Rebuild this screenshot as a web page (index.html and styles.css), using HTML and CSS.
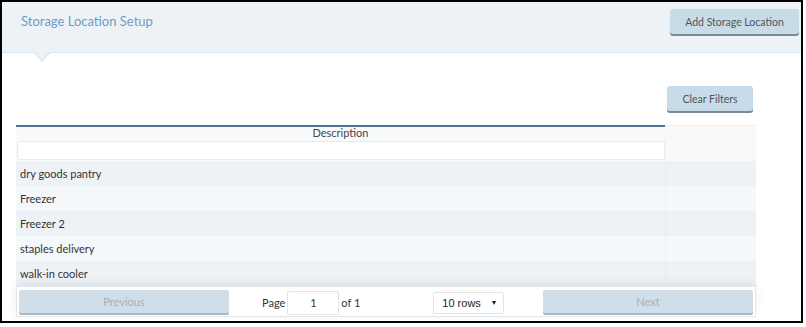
FILE: index.html
```html
<!DOCTYPE html>
<html>
<head>
<meta charset="utf-8">
<link rel="stylesheet" href="styles.css">
</head>
<body>
<div class="frame">
  <div class="header">
    <div class="title">Storage Location Setup</div>
    <button class="btn btn-add">Add Storage Location</button>
    <span class="pointer"></span>
  </div>
  <div class="content">
    <div class="toolbar">
      <button class="btn btn-clear">Clear Filters</button>
    </div>
    <div class="grid">
      <div class="row head">
        <div class="c1 head-title">Description</div>
        <div class="c2"></div>
      </div>
      <div class="row filter">
        <div class="c1"><input class="filter-input" type="text"></div>
        <div class="c2"></div>
      </div>
      <div class="row odd"><div class="c1">dry goods pantry</div><div class="c2"></div></div>
      <div class="row even"><div class="c1">Freezer</div><div class="c2"></div></div>
      <div class="row odd"><div class="c1">Freezer 2</div><div class="c2"></div></div>
      <div class="row even"><div class="c1">staples delivery</div><div class="c2"></div></div>
      <div class="row odd"><div class="c1">walk-in cooler</div><div class="c2"></div></div>
      <div class="pager">
        <button class="pbtn">Previous</button>
        <div class="pcenter">
          <span class="pinfo">Page <input class="pinput" type="text" value="1"> of 1</span>
          <span class="select">10 rows<span class="arrow">&#9660;</span></span>
        </div>
        <button class="pbtn">Next</button>
      </div>
    </div>
  </div>
</div>
</body>
</html>
```
FILE: styles.css
```css
* { box-sizing: border-box; }
body { margin: 0; background: #fff; font-family: Lato, "Open Sans", sans-serif; }
.frame {
  width: 803px;
  height: 323px;
  border: 2px solid #000;
  background: #fff;
  position: relative;
}
.header {
  position: relative;
  height: 51px;
  background: #edf2f7;
  border-bottom: 1px solid #dbe5ee;
  display: flex;
  justify-content: space-between;
  align-items: flex-start;
  padding: 7px 2px 0 19px;
}
.title {
  color: #6f9cc4;
  font-size: 13px;
  line-height: 16px;
  margin-top: 4px;
}
.pointer {
  position: absolute;
  left: 31px;
  top: 50px;
  width: 0;
  height: 0;
  border-left: 9px solid transparent;
  border-right: 9px solid transparent;
  border-top: 10px solid #dbe5ee;
}
.pointer::after {
  content: "";
  position: absolute;
  left: -8px;
  top: -11px;
  border-left: 8px solid transparent;
  border-right: 8px solid transparent;
  border-top: 9px solid #edf2f7;
}
.btn {
  font-family: Lato, sans-serif;
  font-size: 10.5px;
  color: #555;
  background: #c7dbe9;
  border: none;
  border-radius: 3px;
  box-shadow: 0 2px 0 #7d8993;
  height: 25px;
  padding: 0;
}
.btn-add { width: 129px; }
.content { padding: 0 0 0 14px; }
.toolbar {
  width: 740px;
  display: flex;
  justify-content: flex-end;
  padding: 33px 3px 0 0;
}
.btn-clear { width: 86px; }
.grid { width: 740px; margin-top: 14px; }
.row { display: flex; }
.c1 { width: 649px; }
.c2 { flex: 1; border-left: 1px solid rgba(0,0,0,0.02); }
.head .c1 {
  border-top: 2px solid #4e7396;
  background: #f9fafb;
  text-align: center;
  font-size: 11px;
  color: #444;
  height: 14px;
  line-height: 12px;
}
.head .c2 { background: #f9f9f9; border-top: 1px solid #f0f0f0; }
.filter .c1 { background: #f9fafb; padding: 2px 0 1px 1px; height: 22px; }
.filter .c2 { background: #f9f9f9; }
.filter-input {
  width: 648px;
  height: 19px;
  border: 1px solid #e9ecef;
  border-radius: 2px;
  background: #fff;
  display: block;
}
.odd, .even { height: 25px; }
.odd { background: #edf2f6; }
.even { background: #f5f8fb; }
.odd .c1, .even .c1 {
  font-size: 11px;
  color: #333;
  line-height: 25px;
  padding-left: 4px;
}
.pager {
  height: 31px;
  border: 1px solid #e3e6e9;
  background: #fff;
  box-shadow: 0 -3px 10px rgba(0,0,0,0.07);
  display: flex;
  align-items: flex-start;
  padding: 3px 2px 0 2px;
  position: relative;
}
.pbtn {
  width: 210px;
  height: 23px;
  background: #cfdee9;
  border: none;
  border-radius: 2px;
  box-shadow: 0 2px 0 #a9b8c4;
  font-family: Lato, sans-serif;
  font-size: 11px;
  color: #a9afb4;
  padding: 0;
}
.pcenter {
  flex: 1;
  display: flex;
  align-items: center;
  padding-left: 33px;
  height: 25px;
}
.pinfo { font-size: 11px; color: #333; display: flex; align-items: center; }
.pinput {
  width: 52px;
  height: 24px;
  margin: 0 2px 0 2px;
  border: 1px solid #e3e3e3;
  border-radius: 2px;
  text-align: center;
  font-family: Lato, sans-serif;
  font-size: 11px;
  color: #333;
}
.select {
  margin-left: 73px;
  width: 71px;
  height: 22px;
  border: 1px solid #e3e3e3;
  border-radius: 2px;
  font-family: "Liberation Sans", Arial, sans-serif;
  font-size: 11px;
  color: #222;
  display: flex;
  align-items: center;
  justify-content: space-between;
  padding: 0 6px 0 8px;
}
.arrow { font-size: 7px; }
```
